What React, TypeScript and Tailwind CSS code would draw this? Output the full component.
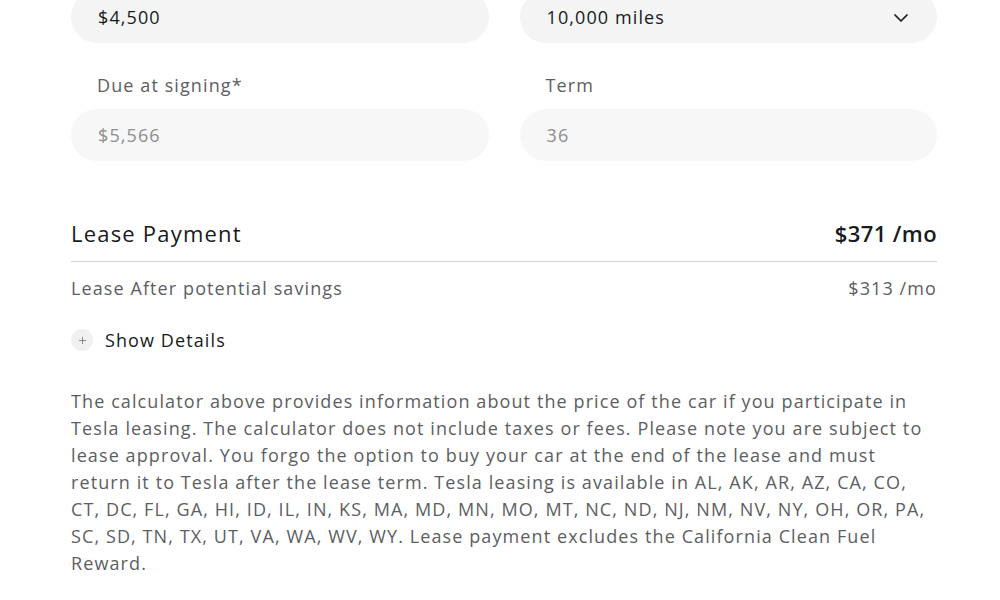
import { ChevronDown, Plus } from "lucide-react";

const font = { fontFamily: '"Open Sans", "Liberation Sans", sans-serif' };

function Field({ label, value, muted, select }: { label?: string; value: string; muted?: boolean; select?: boolean }) {
  return (
    <div className="flex flex-col">
      {label && (
        <label className="pl-[26px] pb-[12px] text-[18px] leading-[24px] tracking-[1.1px] text-[#5c5e62]">{label}</label>
      )}
      <div
        className={`flex h-[52px] items-center justify-between rounded-full pl-[27px] pr-[24px] pt-[1px] text-[18px] tracking-[1.1px] ${
          muted ? "bg-[#f7f7f7] text-[#8e8e8e]" : "bg-[#f4f4f4] text-[#171a20] font-medium"
        }`}
      >
        <span>{value}</span>
        {select && <ChevronDown className="h-6 w-6 text-[#171a20]" strokeWidth={1.75} />}
      </div>
    </div>
  );
}

export default function App() {
  return (
    <div className="h-[600px] w-full overflow-hidden bg-white" style={font}>
      <div className="-mt-[9px] px-[71px] pr-[63px]">
        <div className="grid grid-cols-2 gap-x-[31px] gap-y-[30px]">
          <Field value="$4,500" />
          <Field value="10,000 miles" select />
          <Field label="Due at signing*" value="$5,566" muted />
          <Field label="Term" value="36" muted />
        </div>

        <div className="mt-[58px] flex items-center justify-between border-b border-[#d0d1d2] pb-[14px] text-[22px] font-medium leading-[28px] tracking-[1.2px] text-[#171a20]">
          <span>Lease Payment</span>
          <span className="font-semibold tracking-[0.4px]">$371 /mo</span>
        </div>

        <div className="mt-[14px] flex items-center justify-between text-[18px] leading-[24px] tracking-[1.1px] text-[#5c5e62]">
          <span>Lease After potential savings</span>
          <span>$313 /mo</span>
        </div>

        <button className="mt-[28px] flex items-center gap-[12px] text-[18px] font-medium leading-[24px] tracking-[1.1px] text-[#171a20]">
          <span className="flex h-[22px] w-[22px] items-center justify-center rounded-full bg-[#f0f0f0]">
            <Plus className="h-[11px] w-[11px] text-[#5c5e62]" strokeWidth={1.5} />
          </span>
          <span>Show Details</span>
        </button>

        <p className="mt-[36px] text-[18px] leading-[27px] tracking-[1.1px] text-[#5c5e62]">
          The calculator above provides information about the price of the car if you participate in Tesla leasing. The
          calculator does not include taxes or fees. Please note you are subject to lease approval. You forgo the option to
          buy your car at the end of the lease and must return it to Tesla after the lease term. Tesla leasing is available
          in AL, AK, AR, AZ, CA, CO, CT, DC, FL, GA, HI, ID, IL, IN, KS, MA, MD, MN, MO, MT, NC, ND, NJ, NM, NV, NY, OH, OR,
          PA, SC, SD, TN, TX, UT, VA, WA, WV, WY. Lease payment excludes the California Clean Fuel Reward.
        </p>

        <p className="mt-[21px] text-[18px] leading-[27px] tracking-[1.1px] text-[#5c5e62]">
          Potential savings include estimated gas savings and other incentives that may be available to you.
        </p>
      </div>
    </div>
  );
}
